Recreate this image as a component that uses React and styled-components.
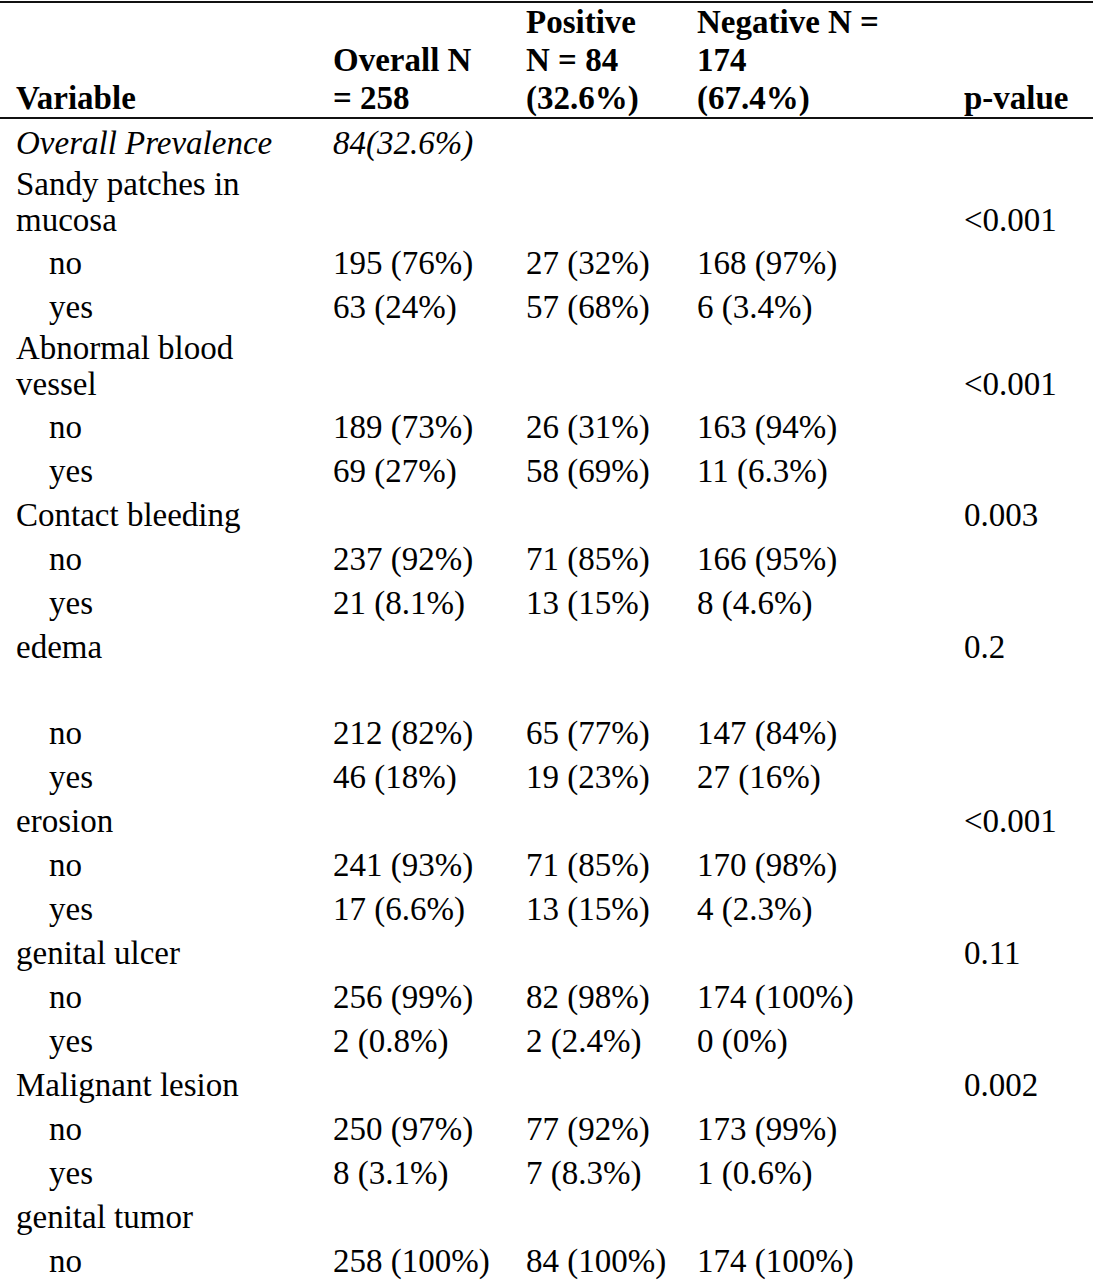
import React from "react";
import styled, { createGlobalStyle } from "styled-components";

const Global = createGlobalStyle`
  html, body { margin: 0; padding: 0; background: #fff; }
  body { font-family: "Liberation Serif", "Times New Roman", serif; color: #000; }
`;

const Table = styled.table`
  width: 1093px;
  border-collapse: collapse;
  table-layout: fixed;
  font-family: "Liberation Serif", "Times New Roman", serif;
  font-size: 33px;
  line-height: 37px;
  color: #000;
  margin-top: 1px;
`;

const HeadRow = styled.tr`
  border-top: 2px solid #111;
  border-bottom: 2px solid #111;
`;

const Th = styled.th`
  text-align: left;
  vertical-align: bottom;
  font-weight: bold;
  padding: 0 8px 0 16px;
  line-height: 38px;
  white-space: nowrap;
`;

const Td = styled.td`
  text-align: left;
  padding-top: ${(p) => (p.$first ? "6px" : p.$multi ? "0px" : "3.5px")};
  padding-bottom: ${(p) => (p.$tall ? "45.5px" : p.$multi ? "4px" : "3.5px")};
  padding-left: ${(p) => (p.$indent ? "49px" : "16px")};
  padding-right: 8px;
  line-height: ${(p) => (p.$multi ? "36px" : "37px")};
  font-style: ${(p) => (p.$italic ? "italic" : "normal")};
  vertical-align: ${(p) => (p.$tall ? "top" : "bottom")};
  white-space: nowrap;
`;

const rows = [
  { label: ["Sandy patches in", "mucosa"], p: "<0.001" },
  { sub: "no", v: ["195 (76%)", "27 (32%)", "168 (97%)"] },
  { sub: "yes", v: ["63 (24%)", "57 (68%)", "6 (3.4%)"] },
  { label: ["Abnormal blood", "vessel"], p: "<0.001" },
  { sub: "no", v: ["189 (73%)", "26 (31%)", "163 (94%)"] },
  { sub: "yes", v: ["69 (27%)", "58 (69%)", "11 (6.3%)"] },
  { label: ["Contact bleeding"], p: "0.003" },
  { sub: "no", v: ["237 (92%)", "71 (85%)", "166 (95%)"] },
  { sub: "yes", v: ["21 (8.1%)", "13 (15%)", "8 (4.6%)"] },
  { label: ["edema"], p: "0.2", tall: true },
  { sub: "no", v: ["212 (82%)", "65 (77%)", "147 (84%)"] },
  { sub: "yes", v: ["46 (18%)", "19 (23%)", "27 (16%)"] },
  { label: ["erosion"], p: "<0.001" },
  { sub: "no", v: ["241 (93%)", "71 (85%)", "170 (98%)"] },
  { sub: "yes", v: ["17 (6.6%)", "13 (15%)", "4 (2.3%)"] },
  { label: ["genital ulcer"], p: "0.11" },
  { sub: "no", v: ["256 (99%)", "82 (98%)", "174 (100%)"] },
  { sub: "yes", v: ["2 (0.8%)", "2 (2.4%)", "0 (0%)"] },
  { label: ["Malignant lesion"], p: "0.002" },
  { sub: "no", v: ["250 (97%)", "77 (92%)", "173 (99%)"] },
  { sub: "yes", v: ["8 (3.1%)", "7 (8.3%)", "1 (0.6%)"] },
  { label: ["genital tumor"], p: "" },
  { sub: "no", v: ["258 (100%)", "84 (100%)", "174 (100%)"] },
];

const lines = (arr) =>
  arr.map((t, i) => (
    <React.Fragment key={i}>
      {i > 0 && <br />}
      {t}
    </React.Fragment>
  ));

export default function App() {
  return (
    <>
      <Global />
      <Table>
        <colgroup>
          <col style={{ width: 317 }} />
          <col style={{ width: 193 }} />
          <col style={{ width: 171 }} />
          <col style={{ width: 267 }} />
          <col />
        </colgroup>
        <thead>
          <HeadRow>
            <Th>Variable</Th>
            <Th>{lines(["Overall N", "= 258"])}</Th>
            <Th>{lines(["Positive", "N = 84", "(32.6%)"])}</Th>
            <Th>{lines(["Negative N =", "174", "(67.4%)"])}</Th>
            <Th>p-value</Th>
          </HeadRow>
        </thead>
        <tbody>
          <tr>
            <Td $italic $first>Overall Prevalence</Td>
            <Td $italic $first>84(32.6%)</Td>
            <Td $first />
            <Td $first />
            <Td $first />
          </tr>
          {rows.map((r, i) => {
            if (r.sub) {
              return (
                <tr key={i}>
                  <Td $indent>{r.sub}</Td>
                  {r.v.map((x, j) => (
                    <Td key={j}>{x}</Td>
                  ))}
                  <Td />
                </tr>
              );
            }
            const multi = r.label.length > 1;
            return (
              <tr key={i}>
                <Td $tall={r.tall} $multi={multi}>{lines(r.label)}</Td>
                <Td $tall={r.tall} $multi={multi} />
                <Td $tall={r.tall} $multi={multi} />
                <Td $tall={r.tall} $multi={multi} />
                <Td $tall={r.tall} $multi={multi}>{r.p}</Td>
              </tr>
            );
          })}
        </tbody>
      </Table>
    </>
  );
}
